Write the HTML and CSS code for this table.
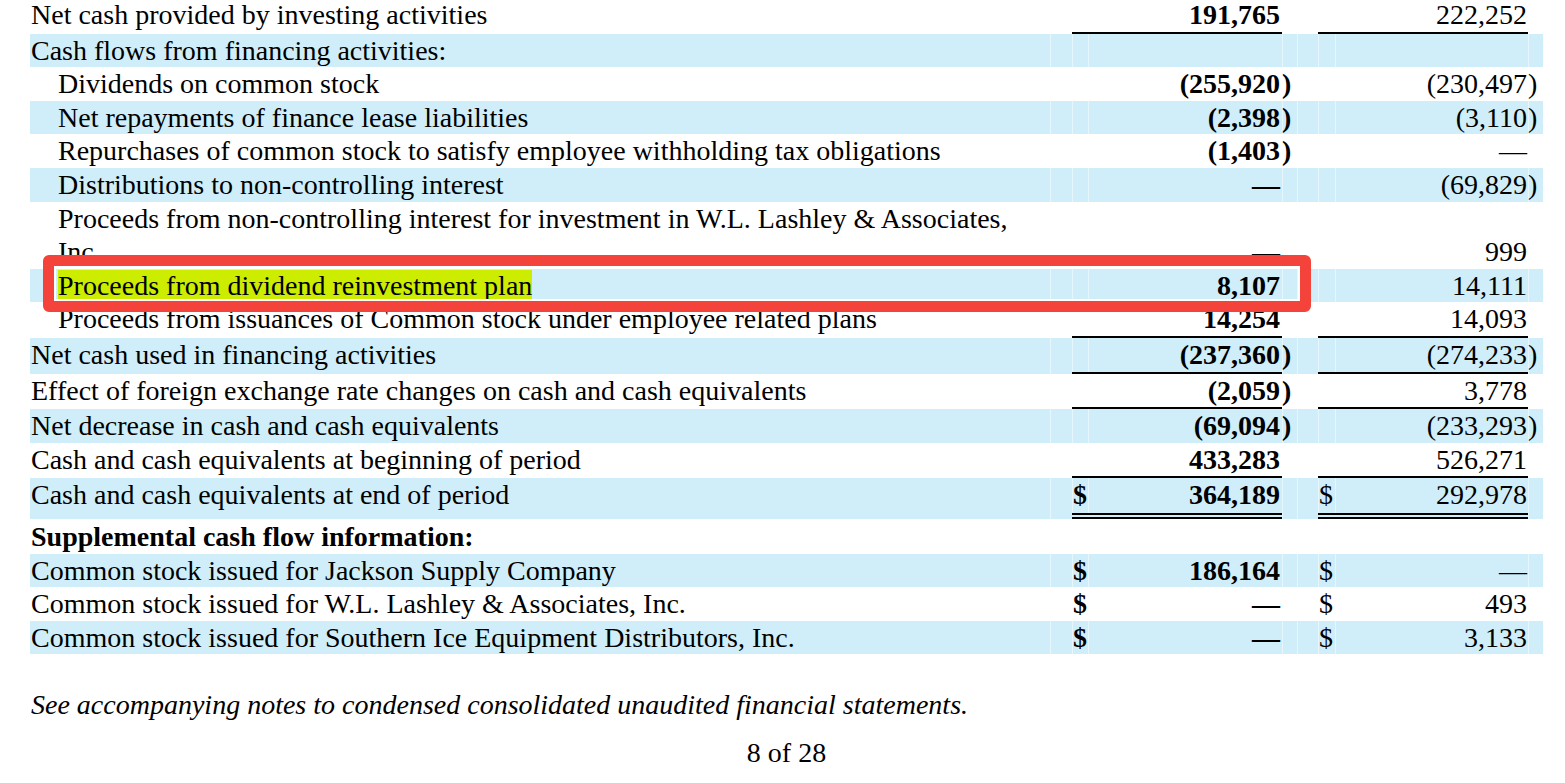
FILE: index.html
```html
<!DOCTYPE html>
<html lang="en">
<head>
<meta charset="utf-8">
<title>Cash flows</title>
<link rel="stylesheet" href="styles.css">
</head>
<body>
<div class="page">
  <table class="cf">
    <colgroup>
      <col class="c-label"><col class="c-sp1"><col class="c-cur1"><col class="c-num1"><col class="c-par1"><col class="c-sp2"><col class="c-cur2"><col class="c-num2"><col class="c-par2">
    </colgroup>
    <tbody>
      <tr>
        <td class="lbl">Net cash provided by investing activities</td><td></td>
        <td class="b ul"></td><td class="num b ul">191,765</td><td></td><td></td>
        <td class="ul"></td><td class="num n2 ul">222,252</td><td></td>
      </tr>
      <tr class="blue">
        <td class="lbl">Cash flows from financing activities:</td><td></td><td></td><td></td><td></td><td></td><td></td><td></td><td></td>
      </tr>
      <tr>
        <td class="lbl ind">Dividends on common stock</td><td></td>
        <td></td><td class="num b">(255,920</td><td class="par b">)</td><td></td>
        <td></td><td class="num n2">(230,497</td><td class="par">)</td>
      </tr>
      <tr class="blue">
        <td class="lbl ind">Net repayments of finance lease liabilities</td><td></td>
        <td></td><td class="num b">(2,398</td><td class="par b">)</td><td></td>
        <td></td><td class="num n2">(3,110</td><td class="par">)</td>
      </tr>
      <tr>
        <td class="lbl ind">Repurchases of common stock to satisfy employee withholding tax obligations</td><td></td>
        <td></td><td class="num b">(1,403</td><td class="par b">)</td><td></td>
        <td></td><td class="num n2">—</td><td></td>
      </tr>
      <tr class="blue">
        <td class="lbl ind">Distributions to non-controlling interest</td><td></td>
        <td></td><td class="num b">—</td><td></td><td></td>
        <td></td><td class="num n2">(69,829</td><td class="par">)</td>
      </tr>
      <tr class="bottom">
        <td class="lbl ind">Proceeds from non-controlling interest for investment in W.L. Lashley &amp; Associates, Inc.</td><td></td>
        <td></td><td class="num b">—</td><td></td><td></td>
        <td></td><td class="num n2">999</td><td></td>
      </tr>
      <tr class="blue">
        <td class="lbl ind"><span class="hl">Proceeds from dividend reinvestment plan</span></td><td></td>
        <td></td><td class="num b">8,107</td><td></td><td></td>
        <td></td><td class="num n2">14,111</td><td></td>
      </tr>
      <tr>
        <td class="lbl ind">Proceeds from issuances of Common stock under employee related plans</td><td></td>
        <td class="ul"></td><td class="num b ul">14,254</td><td></td><td></td>
        <td class="ul"></td><td class="num n2 ul">14,093</td><td></td>
      </tr>
      <tr class="blue">
        <td class="lbl">Net cash used in financing activities</td><td></td>
        <td class="ul"></td><td class="num b ul">(237,360</td><td class="par b">)</td><td></td>
        <td class="ul"></td><td class="num n2 ul">(274,233</td><td class="par">)</td>
      </tr>
      <tr>
        <td class="lbl">Effect of foreign exchange rate changes on cash and cash equivalents</td><td></td>
        <td class="ul"></td><td class="num b ul">(2,059</td><td class="par b">)</td><td></td>
        <td class="ul"></td><td class="num n2 ul">3,778</td><td></td>
      </tr>
      <tr class="blue">
        <td class="lbl">Net decrease in cash and cash equivalents</td><td></td>
        <td></td><td class="num b">(69,094</td><td class="par b">)</td><td></td>
        <td></td><td class="num n2">(233,293</td><td class="par">)</td>
      </tr>
      <tr>
        <td class="lbl">Cash and cash equivalents at beginning of period</td><td></td>
        <td class="ul"></td><td class="num b ul">433,283</td><td></td><td></td>
        <td class="ul"></td><td class="num n2 ul">526,271</td><td></td>
      </tr>
      <tr class="blue total">
        <td class="lbl">Cash and cash equivalents at end of period</td><td></td>
        <td class="cur b dul">$</td><td class="num b dul">364,189</td><td></td><td></td>
        <td class="cur dul">$</td><td class="num n2 dul">292,978</td><td></td>
      </tr>
      <tr class="supp">
        <td class="lbl b">Supplemental cash flow information:</td><td></td><td></td><td></td><td></td><td></td><td></td><td></td><td></td>
      </tr>
      <tr class="blue">
        <td class="lbl">Common stock issued for Jackson Supply Company</td><td></td>
        <td class="cur b">$</td><td class="num b">186,164</td><td></td><td></td>
        <td class="cur">$</td><td class="num n2">—</td><td></td>
      </tr>
      <tr>
        <td class="lbl">Common stock issued for W.L. Lashley &amp; Associates, Inc.</td><td></td>
        <td class="cur b">$</td><td class="num b">—</td><td></td><td></td>
        <td class="cur">$</td><td class="num n2">493</td><td></td>
      </tr>
      <tr class="blue">
        <td class="lbl">Common stock issued for Southern Ice Equipment Distributors, Inc.</td><td></td>
        <td class="cur b">$</td><td class="num b">—</td><td></td><td></td>
        <td class="cur">$</td><td class="num n2">3,133</td><td></td>
      </tr>
    </tbody>
  </table>
  <p class="note">See accompanying notes to condensed consolidated unaudited financial statements.</p>
  <p class="pageno">8 of 28</p>
  <div class="callout" aria-hidden="true"></div>
</div>
</body>
</html>
```
FILE: styles.css
```css
html, body {
  margin: 0;
  padding: 0;
  background: #fff;
}

body {
  font-family: "Liberation Serif", "Times New Roman", serif;
  font-size: 28px;
  color: #000;
}

.page {
  position: relative;
  width: 1565px;
  height: 783px;
  overflow: hidden;
}

.cf {
  margin: -2px 0 0 30px;
  width: 1513px;
  table-layout: fixed;
  border-collapse: separate;
  border-spacing: 0;
}

.c-label { width: 1020px; }
.c-sp1 { width: 22px; }
.c-cur1 { width: 16px; }
.c-num1 { width: 194px; }
.c-par1 { width: 15px; }
.c-sp2 { width: 21px; }
.c-cur2 { width: 17px; }
.c-num2 { width: 193px; }
.c-par2 { width: 15px; }

.cf td {
  padding: 0;
  line-height: 33.6px;
  vertical-align: baseline;
  white-space: nowrap;
}

.cf td.lbl {
  padding-left: 1px;
  white-space: normal;
}

.cf td.ind {
  padding-left: 28px;
}

.cf tr.bottom td {
  vertical-align: bottom;
}

.cf tr.bottom td.lbl {
  vertical-align: baseline;
}

.cf td.num {
  text-align: right;
  padding-right: 2px;
}

.cf td.num.n2 {
  padding-right: 1px;
}

.cf td.par {
  text-align: left;
}

.cf td.cur {
  text-align: left;
  padding-left: 1px;
}

.b {
  font-weight: bold;
}

.cf td.ul {
  border-bottom: 2px solid #000;
}

.cf td.dul {
  border-bottom: 6px double #000;
}

.cf tr.total td {
  padding-bottom: 1px;
}

.cf tr.supp td {
  padding-top: 1px;
}

.cf tr.blue td {
  background: #cfeefa;
}

.cf tr.blue td + td {
  box-shadow: inset 1px 0 0 rgba(255, 255, 255, 0.45);
}

.hl {
  background: #ccec00;
}

.note {
  margin: 34px 0 0 31px;
  font-style: italic;
  line-height: 33.6px;
}

.pageno {
  margin: 14px 0 0 30px;
  width: 1513px;
  text-align: center;
  line-height: 33.6px;
}

.callout {
  position: absolute;
  left: 43px;
  top: 255px;
  width: 1268px;
  height: 57px;
  box-sizing: border-box;
  border: 11px solid #f3433a;
  border-radius: 6px;
  box-shadow: inset 0 0 0 2px #fff;
}
```
